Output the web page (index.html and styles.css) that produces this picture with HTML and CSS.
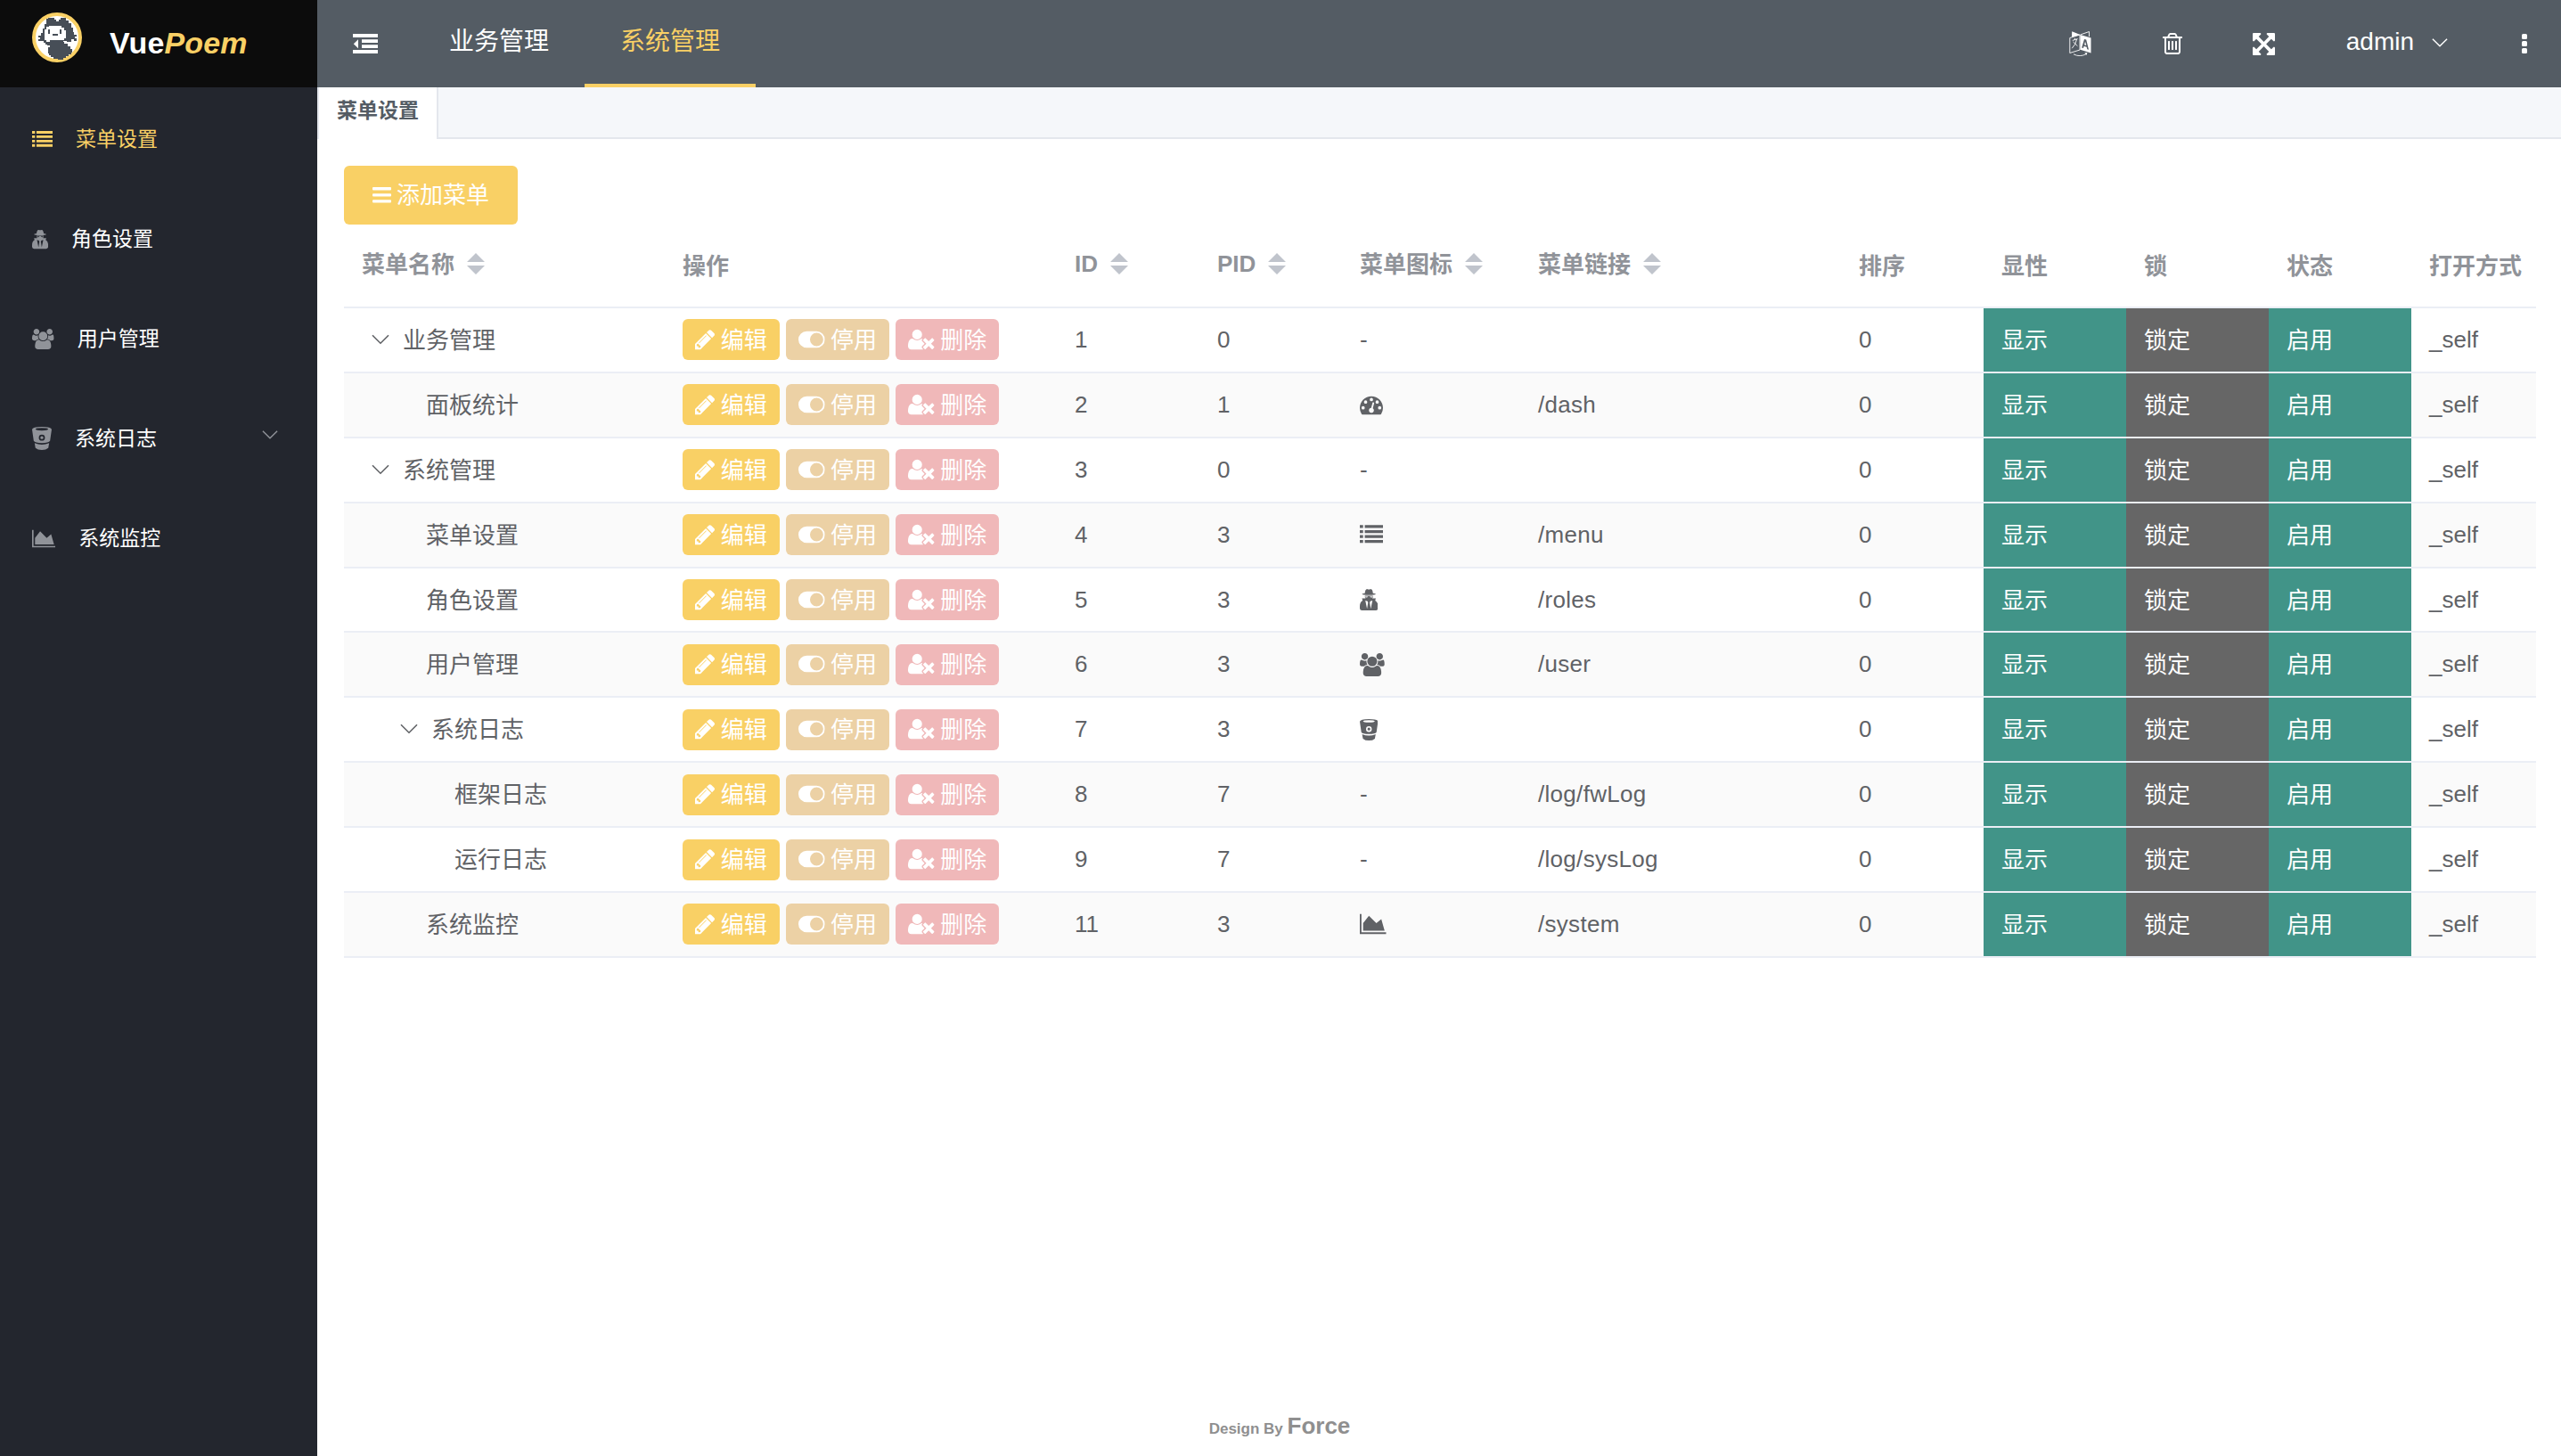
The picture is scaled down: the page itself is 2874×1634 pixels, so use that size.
FILE: index.html
```
<!DOCTYPE html>
<html lang="zh-CN">
<head>
<meta charset="utf-8">
<title>VuePoem</title>
<link rel="stylesheet" href="styles.css">
</head>
<body>
<svg class="sprite" aria-hidden="true">
  <symbol id="pencil" viewBox="128 0 1536 1792"><path d="M491 1536l91-91-235-235-91 91v107h128v128h107zm523-928q0-22-22-22-10 0-17 7l-542 542q-7 7-7 17 0 22 22 22 10 0 17-7l542-542q7-7 7-17zm-54-192l416 416-832 832h-416v-416zm683 96q0 53-37 90l-166 166-416-416 166-165q36-38 90-38 53 0 91 38l235 234q37 39 37 91z"/></symbol>
  <symbol id="toggle" viewBox="0 0 2048 1792"><path fill-rule="evenodd" d="M640 256h768a640 640 0 0 1 0 1280h-768a640 640 0 0 1 0-1280zm768 128a512 512 0 0 0 0 1024a512 512 0 0 0 0-1024z"/></symbol>
  <symbol id="user-x" viewBox="0 0 2048 1792"><path d="M704 896q-159 0-271.5-112.5t-112.5-271.5 112.5-271.5 271.5-112.5 271.5 112.5 112.5 271.5-112.5 271.5-271.5 112.5zm1077 320l249 249q9 9 9 23 0 13-9 22l-136 136q-9 9-22 9-14 0-23-9l-249-249-249 249q-9 9-23 9-13 0-22-9l-136-136q-9-9-9-22 0-14 9-23l249-249-249-249q-9-9-9-23 0-13 9-22l136-136q9-9 22-9 14 0 23 9l249 249 249-249q9-9 23-9 13 0 22 9l136 136q9 9 9 22 0 14-9 23zm-498 0l-181 181q-37 37-37 91 0 53 37 90l83 83q-21 3-44 3h-874q-121 0-194-69t-73-190q0-53 3.5-103.5t14-109 26.5-108.5 43-97.5 62-81 85.5-53.5 111.5-20q19 0 39 17 154 122 319 122t319-122q20-17 39-17 28 0 57 6-28 27-41 50t-13 56q0 54 37 91z"/></symbol>
  <symbol id="list" viewBox="0 0 1792 1792"><path d="M0 160h256v224H0zM384 160h1408v224H384zM0 544h256v224H0zM384 544h1408v224H384zM0 928h256v224H0zM384 928h1408v224H384zM0 1312h256v224H0zM384 1312h1408v224H384z"/></symbol>
  <symbol id="secret" viewBox="0 0 1408 1792"><path fill-rule="evenodd" d="M390 390Q420 90 560 70Q704 140 848 70Q988 90 1018 390Q1240 420 1240 460Q1200 540 704 540Q208 540 168 460Q168 420 390 390zM400 590H1008Q1030 720 960 790H1240L1190 960Q1408 1080 1408 1400V1560Q1400 1700 1240 1728H168Q8 1700 0 1560V1400Q0 1080 218 960L168 790H448Q380 720 400 590zM420 640L450 720Q600 740 650 650zM988 640L958 720Q808 740 758 650zM430 960L560 1600L640 1120L600 1020zM978 960L848 1600L768 1120L808 1020z"/></symbol>
  <symbol id="group" viewBox="0 0 1920 1792"><path d="M593 896q-162 5-265 128h-134q-82 0-138-40.5t-56-118.5q0-353 124-353 6 0 43.5 21t97.5 42.5 119 21.5q67 0 133-23-5 37-5 66 0 139 81 256zm1071 637q0 120-73 189.5t-194 69.5h-874q-121 0-194-69.5t-73-189.5q0-53 3.5-103.5t14-109 26.5-108.5 43-97.5 62-81 85.5-53.5 111.5-20q10 0 43 21.5t73 48 107 48 135 21.5 135-21.5 107-48 73-48 43-21.5q61 0 111.5 20t85.5 53.5 62 81 43 97.5 26.5 108.5 14 109 3.5 103.5zm-1024-1277q0 106-75 181t-181 75-181-75-75-181 75-181 181-75 181 75 75 181zm704 384q0 159-112.5 271.5t-271.5 112.5-271.5-112.5-112.5-271.5 112.5-271.5 271.5-112.5 271.5 112.5 112.5 271.5zm576 225q0 78-56 118.5t-138 40.5h-134q-103-123-265-128 81-117 81-256 0-29-5-66 66 23 133 23 59 0 119-21.5t97.5-42.5 43.5-21q124 0 124 353zm-128-609q0 106-75 181t-181 75-181-75-75-181 75-181 181-75 181 75 75 181z"/></symbol>
  <symbol id="bucket" viewBox="0 0 1408 1792"><path fill-rule="evenodd" d="M0 260Q20 70 704 64Q1388 70 1408 260L1290 1080Q1200 1220 704 1230Q208 1220 118 1080zM704 150Q270 155 250 235Q270 325 704 330Q1138 325 1158 235Q1138 155 704 150zM704 620a220 220 0 0 0 0 440a220 220 0 0 0 0-440zM704 730a110 110 0 0 1 0 220a110 110 0 0 1 0-220zM180 1240Q704 1460 1228 1240L1165 1580Q1000 1730 704 1730Q408 1730 243 1580z"/></symbol>
  <symbol id="area" viewBox="0 0 2048 1792"><path d="M2048 1536v128h-2048v-1536h128v1408h1920zm-384-1024l256 896h-1664v-576l448-576 576 576z"/></symbol>
  <symbol id="dash" viewBox="0 0 1792 1792"><path fill-rule="evenodd" d="M1792 1152q0 261-141 483-19 29-54 29h-1402q-35 0-54-29-141-221-141-483 0-182 71-348t191-286 286-191 348-71 348 71 286 191 191 286 71 348zM256 1024a128 128 0 0 0 0 256a128 128 0 0 0 0-256zM448 576a128 128 0 0 0 0 256a128 128 0 0 0 0-256zM896 384a128 128 0 0 0 0 256a128 128 0 0 0 0-256zM1344 576a128 128 0 0 0 0 256a128 128 0 0 0 0-256zM1536 1024a128 128 0 0 0 0 256a128 128 0 0 0 0-256zM1004 1185l101-382q6-26-7.5-48.5t-38.5-29.5-48 6.5-30 39.5l-101 382q-60 5-107 43.5t-63 98.5q-20 77 20 146t117 89 146-20 89-117q16-60-6-117t-72-91z"/></symbol>
  <symbol id="down" viewBox="0 0 20 12"><path d="M1 1.2L10 10.2L19 1.2" fill="none" stroke="currentColor" stroke-width="1.6"/></symbol>
  <symbol id="sort" viewBox="0 0 20 24"><path d="M0 10L10 0L20 10zM0 14L10 24L20 14z"/></symbol>
</svg>

<div class="app">
  <aside class="sidebar">
    <div class="brand">
      <svg class="logo" viewBox="0 0 56 56">
        <circle cx="28" cy="28" r="26" fill="#fff" stroke="#f9d065" stroke-width="4"/>
        <path fill="#474e57" d="M18 6h7v2h2v2h3V8h2V6h6v3h3v3h3v5h2v5h1v3h3v2h-2v2h2v3h-3v-2h-3v3h-5v-1h-4v1h-2l-4 1h-3l-3 2v1h-6v-1h-2v-2h-2v-2H7v-2h2v-2H7v-2h3v-3h2v-5h2v-5h2V7h2z"/>
        <path fill="#fff" d="M19 15h14v2h3v3h2v9h-2v2H20v2h-4v-2h-2V19h2v-3h3z"/>
        <path fill="#474e57" d="M18 19h2v5h-2zM31 19h2v5h-2zM23 24h6v2h-6zM24 33h12v2h4v3h3v3h2v4h-1v2h-3v2h-3v2h-3v2h-6v-1h-5v-2h-3v-2h-2v-2h-1v-7h2v-3h2v-2h2z"/>
      </svg>
      <div class="wordmark">Vue<em>Poem</em></div>
    </div>
    <nav class="menu">
      <a class="item active"><svg class="w28"><use href="#list"/></svg><span>菜单设置</span></a>
      <a class="item"><svg class="w22"><use href="#secret"/></svg><span>角色设置</span></a>
      <a class="item"><svg class="w30"><use href="#group"/></svg><span>用户管理</span></a>
      <a class="item"><svg class="w22 large"><use href="#bucket"/></svg><span>系统日志</span><svg class="caret"><use href="#down"/></svg></a>
      <a class="item"><svg class="w32"><use href="#area"/></svg><span>系统监控</span></a>
    </nav>
  </aside>

  <main class="main">
    <header class="topbar">
      <svg class="fold" viewBox="0 0 28 22"><path d="M0 0h28v4H0zM10 6.2h18v3.7H10zM10 12.2h18v3.7H10zM0 18h28v4H0zM6 6.2v10L.8 11.2z"/></svg>
      <nav class="topnav"><a>业务管理</a><a class="active">系统管理</a></nav>
      <div class="tools">
        <svg class="lang" viewBox="0 0 25 28"><path d="M3.2.3L12.5 4L3 6.8z"/><path fill="none" stroke="#fff" stroke-width=".9" d="M12.5 4L22.5.5V6M.8 7.5L12 4V21L.8 24.5zM5 25.8Q12 29.6 19.5 25.5M3.8 10.4L9.5 8.6M6.4 7.8V9.6M8.6 9Q7.5 15 3.2 19.2M4.5 12L9.4 16.6"/><path fill-rule="evenodd" d="M12.5 4L24.5 7.5V24.6L12.5 20.8zM17 9L14.2 18.5L16 19L16.6 16.8L19.7 17.7L20.3 20.3L22 20.8L19.2 9.6zM18 11.5L19.3 16L17.1 15.3zM17.4 24.6L20.4 24L19.4 27z"/></svg>
        <svg class="trash" viewBox="192 128 1408 1536"><path d="M704 736v576q0 14-9 23t-23 9h-64q-14 0-23-9t-9-23v-576q0-14 9-23t23-9h64q14 0 23 9t9 23zm256 0v576q0 14-9 23t-23 9h-64q-14 0-23-9t-9-23v-576q0-14 9-23t23-9h64q14 0 23 9t9 23zm256 0v576q0 14-9 23t-23 9h-64q-14 0-23-9t-9-23v-576q0-14 9-23t23-9h64q14 0 23 9t9 23zm128 724v-948h-896v948q0 22 7 40.5t14.500 27 10.500 8.500h832q3 0 10.500-8.500t14.500-27 7-40.500zm-672-1076h448l-48-117q-7-9-17-11h-317q-10 2-17 11zm928 32v64q0 14-9 23t-23 9h-96v948q0 83-47 143.500t-113 60.500h-832q-66 0-113-58.500t-47-141.500v-952h-96q-14 0-23-9t-9-23v-64q0-14 9-23t23-9h309l70-167q15-37 54-63t79-26h320q40 0 79 26t54 63l70 167h309q14 0 23 9t9 23z"/></svg>
        <svg class="full" viewBox="128 128 1536 1536"><path d="M1411 541l-355 355 355 355 144-144q29-31 70-14 39 17 39 59v448q0 26-19 45t-45 19h-448q-42 0-59-40-17-39 14-69l144-144-355-355-355 355 144 144q31 30 14 69-17 40-59 40h-448q-26 0-45-19t-19-45v-448q0-42 40-59 39-17 69 14l144 144 355-355-355-355-144 144q-19 19-45 19-12 0-24-5-40-17-40-59v-448q0-26 19-45t45-19h448q42 0 59 40 17 39-14 69l-144 144 355 355 355-355-144-144q-31-30-14-69 17-40 59-40h448q26 0 45 19t19 45v448q0 42-39 59-13 5-25 5-26 0-45-19z"/></svg>
        <span class="user">admin</span>
        <svg class="caret"><use href="#down"/></svg>
        <svg class="more" viewBox="0 0 6 22"><rect width="6" height="6" rx="1.500"/><rect y="8" width="6" height="6" rx="1.500"/><rect y="16" width="6" height="6" rx="1.500"/></svg>
      </div>
    </header>

    <div class="tabs"><div class="tab">菜单设置</div></div>

    <section class="content">
      <button class="add"><svg viewBox="0 0 21 18"><rect width="21" height="3.400" rx="1"/><rect y="7.200" width="21" height="3.400" rx="1"/><rect y="14.200" width="21" height="3.400" rx="1"/></svg>添加菜单</button>

      <div class="table">
        <div class="row head">
          <div class="sortable"><span>菜单名称</span><svg><use href="#sort"/></svg></div><div>操作</div>
          <div class="sortable">ID<svg><use href="#sort"/></svg></div><div class="sortable">PID<svg><use href="#sort"/></svg></div>
          <div class="sortable"><span>菜单图标</span><svg><use href="#sort"/></svg></div><div class="sortable"><span>菜单链接</span><svg><use href="#sort"/></svg></div>
          <div>排序</div><div>显性</div><div>锁</div><div>状态</div><div>打开方式</div>
        </div>
        <div class="row"><div class="name"><svg class="caret"><use href="#down"/></svg>业务管理</div><div class="ops"><button class="edit"><svg class="w24"><use href="#pencil"/></svg>编辑</button><button class="stop"><svg class="w32"><use href="#toggle"/></svg>停用</button><button class="del"><svg class="w32"><use href="#user-x"/></svg>删除</button></div><div>1</div><div>0</div><div>-</div><div class="link"></div><div>0</div><div class="on">显示</div><div class="lock">锁定</div><div class="on">启用</div><div>_self</div></div>
        <div class="row"><div class="name leaf">面板统计</div><div class="ops"><button class="edit"><svg class="w24"><use href="#pencil"/></svg>编辑</button><button class="stop"><svg class="w32"><use href="#toggle"/></svg>停用</button><button class="del"><svg class="w32"><use href="#user-x"/></svg>删除</button></div><div>2</div><div>1</div><div><svg class="w28"><use href="#dash"/></svg></div><div class="link">/dash</div><div>0</div><div class="on">显示</div><div class="lock">锁定</div><div class="on">启用</div><div>_self</div></div>
        <div class="row"><div class="name"><svg class="caret"><use href="#down"/></svg>系统管理</div><div class="ops"><button class="edit"><svg class="w24"><use href="#pencil"/></svg>编辑</button><button class="stop"><svg class="w32"><use href="#toggle"/></svg>停用</button><button class="del"><svg class="w32"><use href="#user-x"/></svg>删除</button></div><div>3</div><div>0</div><div>-</div><div class="link"></div><div>0</div><div class="on">显示</div><div class="lock">锁定</div><div class="on">启用</div><div>_self</div></div>
        <div class="row"><div class="name leaf">菜单设置</div><div class="ops"><button class="edit"><svg class="w24"><use href="#pencil"/></svg>编辑</button><button class="stop"><svg class="w32"><use href="#toggle"/></svg>停用</button><button class="del"><svg class="w32"><use href="#user-x"/></svg>删除</button></div><div>4</div><div>3</div><div><svg class="w28"><use href="#list"/></svg></div><div class="link">/menu</div><div>0</div><div class="on">显示</div><div class="lock">锁定</div><div class="on">启用</div><div>_self</div></div>
        <div class="row"><div class="name leaf">角色设置</div><div class="ops"><button class="edit"><svg class="w24"><use href="#pencil"/></svg>编辑</button><button class="stop"><svg class="w32"><use href="#toggle"/></svg>停用</button><button class="del"><svg class="w32"><use href="#user-x"/></svg>删除</button></div><div>5</div><div>3</div><div><svg class="w22"><use href="#secret"/></svg></div><div class="link">/roles</div><div>0</div><div class="on">显示</div><div class="lock">锁定</div><div class="on">启用</div><div>_self</div></div>
        <div class="row"><div class="name leaf">用户管理</div><div class="ops"><button class="edit"><svg class="w24"><use href="#pencil"/></svg>编辑</button><button class="stop"><svg class="w32"><use href="#toggle"/></svg>停用</button><button class="del"><svg class="w32"><use href="#user-x"/></svg>删除</button></div><div>6</div><div>3</div><div><svg class="w30"><use href="#group"/></svg></div><div class="link">/user</div><div>0</div><div class="on">显示</div><div class="lock">锁定</div><div class="on">启用</div><div>_self</div></div>
        <div class="row"><div class="name sub"><svg class="caret"><use href="#down"/></svg>系统日志</div><div class="ops"><button class="edit"><svg class="w24"><use href="#pencil"/></svg>编辑</button><button class="stop"><svg class="w32"><use href="#toggle"/></svg>停用</button><button class="del"><svg class="w32"><use href="#user-x"/></svg>删除</button></div><div>7</div><div>3</div><div><svg class="w22"><use href="#bucket"/></svg></div><div class="link"></div><div>0</div><div class="on">显示</div><div class="lock">锁定</div><div class="on">启用</div><div>_self</div></div>
        <div class="row"><div class="name deep">框架日志</div><div class="ops"><button class="edit"><svg class="w24"><use href="#pencil"/></svg>编辑</button><button class="stop"><svg class="w32"><use href="#toggle"/></svg>停用</button><button class="del"><svg class="w32"><use href="#user-x"/></svg>删除</button></div><div>8</div><div>7</div><div>-</div><div class="link">/log/fwLog</div><div>0</div><div class="on">显示</div><div class="lock">锁定</div><div class="on">启用</div><div>_self</div></div>
        <div class="row"><div class="name deep">运行日志</div><div class="ops"><button class="edit"><svg class="w24"><use href="#pencil"/></svg>编辑</button><button class="stop"><svg class="w32"><use href="#toggle"/></svg>停用</button><button class="del"><svg class="w32"><use href="#user-x"/></svg>删除</button></div><div>9</div><div>7</div><div>-</div><div class="link">/log/sysLog</div><div>0</div><div class="on">显示</div><div class="lock">锁定</div><div class="on">启用</div><div>_self</div></div>
        <div class="row"><div class="name leaf">系统监控</div><div class="ops"><button class="edit"><svg class="w24"><use href="#pencil"/></svg>编辑</button><button class="stop"><svg class="w32"><use href="#toggle"/></svg>停用</button><button class="del"><svg class="w32"><use href="#user-x"/></svg>删除</button></div><div>11</div><div>3</div><div><svg class="w32"><use href="#area"/></svg></div><div class="link">/system</div><div>0</div><div class="on">显示</div><div class="lock">锁定</div><div class="on">启用</div><div>_self</div></div>
      </div>
    </section>

    <footer class="footer">Design By <strong>Force</strong></footer>
  </main>
</div>
</body>
</html>
```
FILE: styles.css
```
* { box-sizing: border-box; }

body {
  margin: 0;
  font-family: "Liberation Sans", "Noto Sans CJK SC", sans-serif;
  font-size: 26px;
  color: #606266;
  background: #fff;
}

svg { display: block; flex: none; fill: currentColor; }
.sprite { position: absolute; width: 0; height: 0; }

/* Icon widths follow the em: 1792 glyph units = 1em */
.w22 { width: .7857em; height: 1em; }
.w24 { width: .8571em; height: 1em; }
.w28 { width: 1em; height: 1em; }
.w30 { width: 1.0714em; height: 1em; }
.w32 { width: 1.1429em; height: 1em; }

.caret { width: 20px; height: 12px; }

.app { display: flex; height: 1634px; overflow: hidden; }

/* Sidebar */
.sidebar { width: 356px; flex: none; background: #23262e; color: #fff; }
.brand { display: flex; height: 98px; padding: 14px 0 0 36px; background: #0c0c0c; }
.logo { width: 56px; height: 56px; }
.wordmark { margin: 15px 0 0 31px; font-size: 34px; line-height: 38px; font-weight: bold; letter-spacing: .15px; }
.wordmark em { color: #f9d065; }
.menu { padding-top: 2px; font-size: 23px; }
.item { display: flex; align-items: center; height: 112px; padding-left: 36px; }
.item > svg:first-child { color: #909399; }
.item .large { font-size: 28px; }
.item span { margin-left: 26px; padding-bottom: 4px; }
.item .caret { width: 18px; margin: -8px 0 0 118px; color: #909399; }
.item.active, .item.active > svg:first-child { color: #f9d065; }

/* Top bar */
.main { display: flex; flex-direction: column; flex: 1; min-width: 0; }
.topbar { display: flex; align-items: center; height: 98px; padding: 0 38px 0 40px; background: #545c64; color: #fff; font-size: 28px; }
.fold { width: 28px; height: 22px; }
.topnav { display: flex; margin-left: 40px; }
.topnav a { height: 98px; padding: 0 40px; line-height: 94px; border-bottom: 4px solid transparent; }
.topnav .active { color: #f9d065; border-color: #f9d065; }
.tools { display: flex; align-items: center; margin-left: auto; }
.lang { width: 25px; height: 28px; }
.trash { width: 22px; height: 24px; margin-left: 80px; }
.full { width: 25px; height: 25px; margin-left: 79px; }
.user { margin: -4px 0 0 80px; }
.tools .caret { width: 18px; margin: -3px 0 0 20px; }
.more { width: 6px; height: 22px; margin-left: 83px; }

.tabs { display: flex; height: 58px; background: #f5f7fa; border-bottom: 2px solid #e4e7ed; }
.tab { height: 58px; padding: 0 20px; line-height: 52px; font-size: 23px; font-weight: bold; color: #545c64; background: #fff; border: solid #e4e7ed; border-width: 0 2px; }

/* Content */
.content { flex: 1; padding: 30px 28px 0 30px; }
button { display: flex; align-items: center; border: 0; border-radius: 6px; font: inherit; color: #fff; }
.add { height: 66px; padding: 0 32px 5px; gap: 6px; background: #f9d065; }
.add svg { width: 21px; height: 18px; margin-top: 4px; }

.row {
  display: grid;
  grid-template-columns: 360px 440px 160px 160px 200px 360px 160px 160px 160px 160px 140px;
  height: 72.9px;
  border-bottom: 2px solid #ebeef5;
}
.row > div { display: flex; align-items: center; padding-left: 20px; white-space: nowrap; }
.row:nth-child(odd) { background: #fafafa; }
.row.head { height: 94px; background: #fff; color: #909399; font-weight: bold; }
.row.head > div { padding-bottom: 4px; }
.head span { padding-bottom: 4px; }
.head svg { width: 20px; height: 24px; margin-left: 14px; color: #c0c4cc; }
.row > .name, .row > .on, .row > .lock { padding-bottom: 4px; }
.name .caret { margin: 3px 15px 0 11px; }
.row > .name.leaf { padding-left: 92px; }
.row > .name.sub { padding-left: 52px; }
.row > .name.deep { padding-left: 124px; }
.link { letter-spacing: .3px; }
.ops { gap: 7px; }
.ops button { height: 46px; padding: 0 14px 4px; gap: 6.5px; }
.ops button svg { margin-top: 3px; }
.edit { background: #f9d065; }
.stop { background: #ecd1a5; }
.del { background: #f0b8b9; }
.row > .on { background: #419488; color: #fff; }
.row > .lock { background: #666; color: #fff; }

.footer { height: 49px; margin-left: -358px; font-size: 17px; font-weight: bold; text-align: center; color: #8f8f8f; }
.footer strong { font-size: 26px; }
```
